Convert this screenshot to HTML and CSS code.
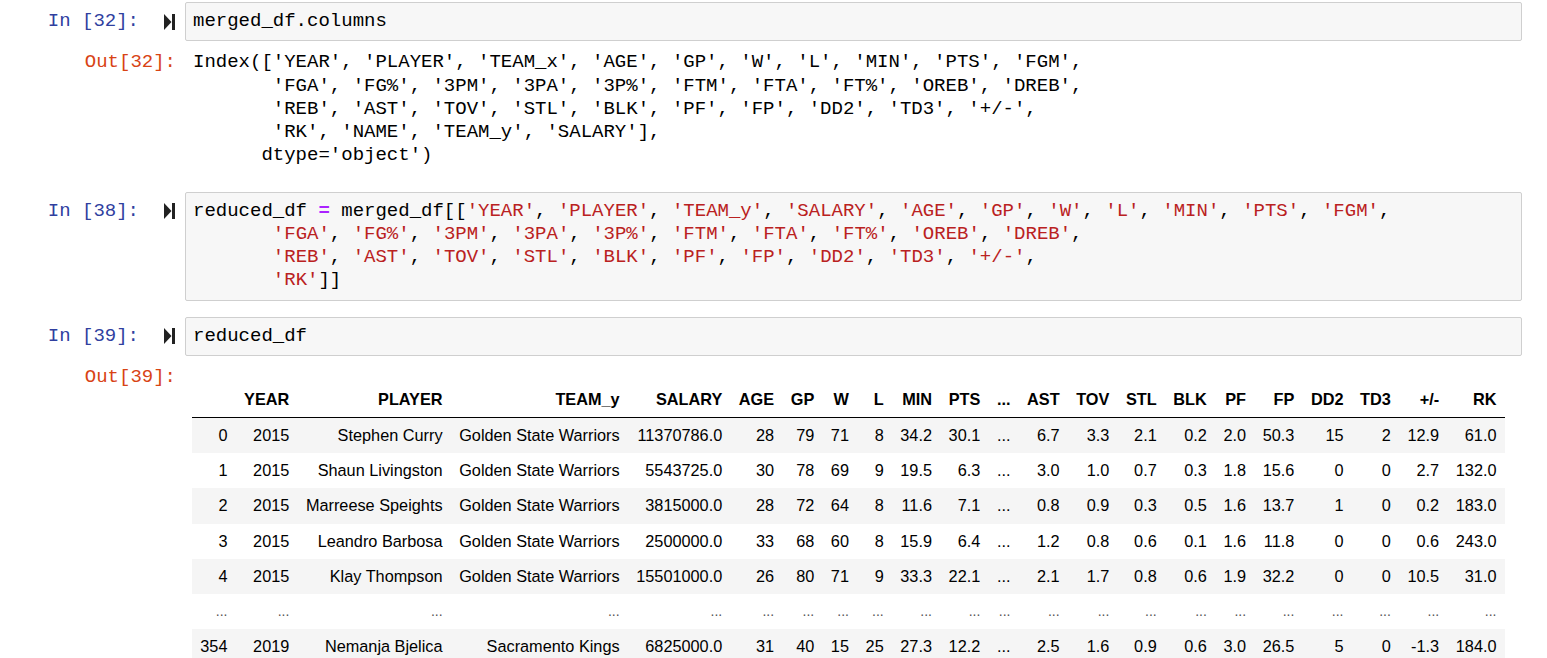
FILE: index.html
```html
<!DOCTYPE html>
<html>
<head>
<meta charset="utf-8">
<link rel="stylesheet" href="styles.css">
</head>
<body>
<div class="notebook">

  <div class="cell cell-first">
    <div class="input">
      <div class="prompt in-prompt"><span>In&nbsp;[32]:</span><svg class="run" width="12" height="16" viewBox="0 0 12 16"><polygon points="0,0 7.5,8 0,16"/><rect x="8" y="0" width="3" height="16"/></svg></div>
      <div class="code-box"><pre class="code">merged_df.columns</pre></div>
    </div>
    <div class="output">
      <div class="prompt out-prompt">Out[32]:</div>
      <pre class="out-text">Index(['YEAR', 'PLAYER', 'TEAM_x', 'AGE', 'GP', 'W', 'L', 'MIN', 'PTS', 'FGM',
       'FGA', 'FG%', '3PM', '3PA', '3P%', 'FTM', 'FTA', 'FT%', 'OREB', 'DREB',
       'REB', 'AST', 'TOV', 'STL', 'BLK', 'PF', 'FP', 'DD2', 'TD3', '+/-',
       'RK', 'NAME', 'TEAM_y', 'SALARY'],
      dtype='object')</pre>
    </div>
  </div>

  <div class="cell cell-second">
    <div class="input">
      <div class="prompt in-prompt"><span>In&nbsp;[38]:</span><svg class="run" width="12" height="16" viewBox="0 0 12 16"><polygon points="0,0 7.5,8 0,16"/><rect x="8" y="0" width="3" height="16"/></svg></div>
      <div class="code-box"><pre class="code">reduced_df <span class="op">=</span> merged_df[[<span class="s">'YEAR'</span>, <span class="s">'PLAYER'</span>, <span class="s">'TEAM_y'</span>, <span class="s">'SALARY'</span>, <span class="s">'AGE'</span>, <span class="s">'GP'</span>, <span class="s">'W'</span>, <span class="s">'L'</span>, <span class="s">'MIN'</span>, <span class="s">'PTS'</span>, <span class="s">'FGM'</span>,
       <span class="s">'FGA'</span>, <span class="s">'FG%'</span>, <span class="s">'3PM'</span>, <span class="s">'3PA'</span>, <span class="s">'3P%'</span>, <span class="s">'FTM'</span>, <span class="s">'FTA'</span>, <span class="s">'FT%'</span>, <span class="s">'OREB'</span>, <span class="s">'DREB'</span>,
       <span class="s">'REB'</span>, <span class="s">'AST'</span>, <span class="s">'TOV'</span>, <span class="s">'STL'</span>, <span class="s">'BLK'</span>, <span class="s">'PF'</span>, <span class="s">'FP'</span>, <span class="s">'DD2'</span>, <span class="s">'TD3'</span>, <span class="s">'+/-'</span>,
       <span class="s">'RK'</span>]]</pre></div>
    </div>
  </div>

  <div class="cell cell-third">
    <div class="input">
      <div class="prompt in-prompt"><span>In&nbsp;[39]:</span><svg class="run" width="12" height="16" viewBox="0 0 12 16"><polygon points="0,0 7.5,8 0,16"/><rect x="8" y="0" width="3" height="16"/></svg></div>
      <div class="code-box"><pre class="code">reduced_df</pre></div>
    </div>
    <div class="output">
      <div class="prompt out-prompt">Out[39]:</div>
      <div class="df-wrap">
        <table class="df">
          <thead>
            <tr><th></th><th>YEAR</th><th>PLAYER</th><th>TEAM_y</th><th>SALARY</th><th>AGE</th><th>GP</th><th>W</th><th>L</th><th>MIN</th><th>PTS</th><th>...</th><th>AST</th><th>TOV</th><th>STL</th><th>BLK</th><th>PF</th><th>FP</th><th>DD2</th><th>TD3</th><th>+/-</th><th>RK</th></tr>
          </thead>
          <tbody>
            <tr><td>0</td><td>2015</td><td>Stephen Curry</td><td>Golden State Warriors</td><td>11370786.0</td><td>28</td><td>79</td><td>71</td><td>8</td><td>34.2</td><td>30.1</td><td>...</td><td>6.7</td><td>3.3</td><td>2.1</td><td>0.2</td><td>2.0</td><td>50.3</td><td>15</td><td>2</td><td>12.9</td><td>61.0</td></tr>
            <tr><td>1</td><td>2015</td><td>Shaun Livingston</td><td>Golden State Warriors</td><td>5543725.0</td><td>30</td><td>78</td><td>69</td><td>9</td><td>19.5</td><td>6.3</td><td>...</td><td>3.0</td><td>1.0</td><td>0.7</td><td>0.3</td><td>1.8</td><td>15.6</td><td>0</td><td>0</td><td>2.7</td><td>132.0</td></tr>
            <tr><td>2</td><td>2015</td><td>Marreese Speights</td><td>Golden State Warriors</td><td>3815000.0</td><td>28</td><td>72</td><td>64</td><td>8</td><td>11.6</td><td>7.1</td><td>...</td><td>0.8</td><td>0.9</td><td>0.3</td><td>0.5</td><td>1.6</td><td>13.7</td><td>1</td><td>0</td><td>0.2</td><td>183.0</td></tr>
            <tr><td>3</td><td>2015</td><td>Leandro Barbosa</td><td>Golden State Warriors</td><td>2500000.0</td><td>33</td><td>68</td><td>60</td><td>8</td><td>15.9</td><td>6.4</td><td>...</td><td>1.2</td><td>0.8</td><td>0.6</td><td>0.1</td><td>1.6</td><td>11.8</td><td>0</td><td>0</td><td>0.6</td><td>243.0</td></tr>
            <tr><td>4</td><td>2015</td><td>Klay Thompson</td><td>Golden State Warriors</td><td>15501000.0</td><td>26</td><td>80</td><td>71</td><td>9</td><td>33.3</td><td>22.1</td><td>...</td><td>2.1</td><td>1.7</td><td>0.8</td><td>0.6</td><td>1.9</td><td>32.2</td><td>0</td><td>0</td><td>10.5</td><td>31.0</td></tr>
            <tr class="ellipsis"><td>...</td><td>...</td><td>...</td><td>...</td><td>...</td><td>...</td><td>...</td><td>...</td><td>...</td><td>...</td><td>...</td><td>...</td><td>...</td><td>...</td><td>...</td><td>...</td><td>...</td><td>...</td><td>...</td><td>...</td><td>...</td><td>...</td></tr>
            <tr><td>354</td><td>2019</td><td>Nemanja Bjelica</td><td>Sacramento Kings</td><td>6825000.0</td><td>31</td><td>40</td><td>15</td><td>25</td><td>27.3</td><td>12.2</td><td>...</td><td>2.5</td><td>1.6</td><td>0.9</td><td>0.6</td><td>3.0</td><td>26.5</td><td>5</td><td>0</td><td>-1.3</td><td>184.0</td></tr>
          </tbody>
        </table>
      </div>
    </div>
  </div>

</div>
</body>
</html>
```

FILE: styles.css
```css
html, body {
  margin: 0;
  padding: 0;
  background: #ffffff;
  overflow: hidden;
}

.notebook {
  width: 1522px;
  padding-top: 2px;
}

.cell {
  display: flex;
  flex-direction: column;
}

.cell-second {
  margin-top: 24px;
}

.cell-third {
  margin-top: 16px;
}

.input,
.output {
  display: flex;
  align-items: flex-start;
}

.prompt {
  width: 185px;
  flex: 0 0 185px;
  box-sizing: border-box;
  padding-right: 9px;
  display: flex;
  justify-content: flex-end;
  align-items: center;
  font-family: "Liberation Mono", monospace;
  font-size: 19px;
  line-height: 23.25px;
  white-space: pre;
}

.in-prompt {
  color: #303F9F;
  padding-top: 8px;
}

.in-prompt .run {
  margin-left: 25px;
  fill: #222;
  display: block;
}

.out-prompt {
  color: #D84315;
  padding-top: 10px;
}

.code-box {
  flex: 1 1 auto;
  background: #f7f7f7;
  border: 1px solid #cfcfcf;
  border-radius: 2px;
  padding: 7px 7px;
}

pre {
  margin: 0;
  font-family: "Liberation Mono", monospace;
  font-size: 19px;
  line-height: 23.25px;
  color: #000;
}

.code .s {
  color: #BA2121;
}

.code .op {
  color: #AA22FF;
  font-weight: bold;
}

.out-text {
  padding-top: 10px;
  padding-left: 8px;
}

.df-wrap {
  padding-top: 26px;
  padding-left: 7px;
}

.df {
  border-collapse: collapse;
  border-spacing: 0;
  font-family: "Liberation Sans", Arial, sans-serif;
  font-size: 16.3px;
  color: #000;
}

.df th,
.df td {
  text-align: right;
  vertical-align: middle;
  white-space: nowrap;
  padding: 0 8.3px;
  height: 35.2px;
  line-height: 19px;
}

.df th {
  font-weight: bold;
}

.df thead tr {
  border-bottom: 1px solid #000;
}

.df tbody tr:nth-child(odd) {
  background: #f5f5f5;
}

.df tr.ellipsis td {
  color: #555;
  font-size: 14px;
}
```
